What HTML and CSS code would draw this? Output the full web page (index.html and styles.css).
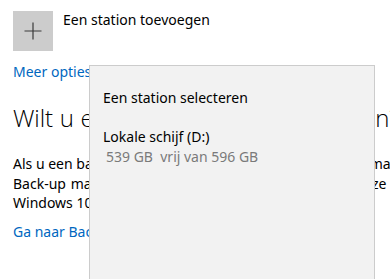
FILE: index.html
```html
<!DOCTYPE html>
<html lang="nl">
<head>
<meta charset="utf-8">
<link rel="stylesheet" href="styles.css">
</head>
<body>
<div class="page">
  <div class="add-row">
    <div class="tile">
      <svg width="18" height="18" viewBox="0 0 18 18"><path d="M9 0.5V17.5M0.5 9H17.5" stroke="#3a3a3a" stroke-width="1.2" fill="none"/></svg>
    </div>
    <div class="add-label">Een station toevoegen</div>
  </div>
  <div class="link more">Meer opties</div>
  <h2 class="heading">Wilt u een oude back-up gebruiken?</h2>
  <p class="body">Als u een back-up hebt gemaakt met het hulpprogramma<br><span class="l2">Back-up maken en terugzetten (Windows 7), werkt deze nog steeds in</span><br>Windows 10.</p>
  <div class="link go">Ga naar Back-up maken en terugzetten (Windows 7)</div>
</div>
<div class="flyout">
  <div class="fly-title">Een station selecteren</div>
  <div class="drive">
    <div class="drive-name">Lokale schijf (D:)</div>
    <div class="drive-size">539 GB&nbsp; vrij van 596 GB</div>
  </div>
</div>
</body>
</html>
```
FILE: styles.css
```css
html, body {
  margin: 0;
  padding: 0;
  background: #ffffff;
  overflow: hidden;
}
body {
  width: 390px;
  height: 279px;
  position: relative;
  font-family: "Noto Sans", "Open Sans", sans-serif;
  color: #000;
  font-size: 14px;
}
.page {
  padding: 11px 0 0 13px;
  white-space: nowrap;
  width: 377px;
  height: 268px;
  overflow: hidden;
}
.add-row {
  display: flex;
  align-items: flex-start;
  gap: 10px;
}
.tile {
  width: 40px;
  height: 40px;
  background: #cccccc;
  display: flex;
  align-items: center;
  justify-content: center;
}
.add-label {
  font-size: 14px;
  line-height: 20px;
  margin-top: -1px;
}
.link {
  color: #0067c0;
  font-size: 14px;
  line-height: 20px;
}
.more {
  margin-top: 11px;
}
.heading {
  font-family: "Open Sans", sans-serif;
  font-weight: 300;
  font-size: 24px;
  line-height: 32px;
  letter-spacing: -0.08px;
  word-spacing: 0.6px;
  margin: 20px 0 0 0;
}
.body {
  margin: 20px 0 0 0;
  font-size: 14px;
  line-height: 19.5px;
}
.l2 {
  word-spacing: 1.2px;
}
.go {
  margin-top: 9px;
}
.flyout {
  position: absolute;
  left: 89px;
  top: 65px;
  width: 286px;
  height: 214px;
  box-sizing: border-box;
  background: #f2f2f2;
  border: 1px solid #cccccc;
  border-bottom: none;
  padding: 22px 0 0 13px;
}
.fly-title {
  font-size: 14px;
  line-height: 20px;
}
.drive {
  margin-top: 19px;
}
.drive-name {
  font-size: 14px;
  line-height: 20px;
}
.drive-size {
  font-size: 14px;
  line-height: 20px;
  color: #7a7a7a;
  padding-left: 3px;
}
```
